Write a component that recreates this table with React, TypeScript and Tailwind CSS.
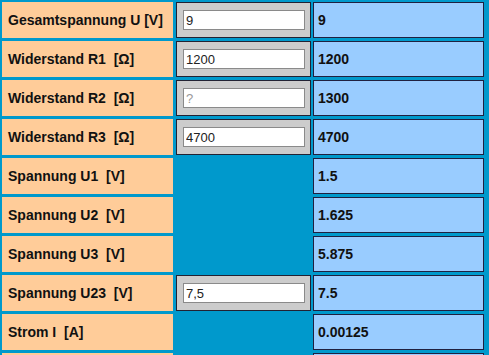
import React from 'react';

type Row = {
  label: string;
  input?: string;
  placeholder?: string;
  value: string;
};

const rows: Row[] = [
  { label: 'Gesamtspannung U [V]', input: '9', value: '9' },
  { label: 'Widerstand R1\u00a0\u00a0[Ω]', input: '1200', value: '1200' },
  { label: 'Widerstand R2\u00a0\u00a0[Ω]', input: '', placeholder: '?', value: '1300' },
  { label: 'Widerstand R3\u00a0\u00a0[Ω]', input: '4700', value: '4700' },
  { label: 'Spannung U1\u00a0\u00a0[V]', value: '1.5' },
  { label: 'Spannung U2\u00a0\u00a0[V]', value: '1.625' },
  { label: 'Spannung U3\u00a0\u00a0[V]', value: '5.875' },
  { label: 'Spannung U23\u00a0\u00a0[V]', input: '7,5', value: '7.5' },
  { label: 'Strom I\u00a0\u00a0[A]', value: '0.00125' },
  // nächste Zeile, nur der obere Rand ist sichtbar
  { label: '', value: '' },
];

function CalcRow({ row }: { row: Row }) {
  return (
    <div className="flex h-[36px] shrink-0">
      {/* Bezeichnung */}
      <div className="flex w-[171px] items-center bg-[#ffcc99] pl-[6px] text-[14px] font-bold text-[#111]">
        {row.label}
      </div>

      {/* Eingabe */}
      {row.input !== undefined ? (
        <div className="ml-[3px] flex w-[135px] items-center border border-[#222233] bg-[#cccccc] pl-[6px]">
          <input
            type="text"
            defaultValue={row.input}
            placeholder={row.placeholder}
            className="h-[20px] w-[122px] border border-[#8a8a8a] bg-white px-[2px] text-[13px] text-[#222] outline-none placeholder:text-[#999]"
          />
        </div>
      ) : (
        <div className="ml-[3px] w-[135px]"></div>
      )}

      {/* Ergebnis */}
      <div className="ml-[2px] flex w-[171px] items-center border border-[#202040] bg-[#99ccff] pl-[4px] text-[14px] font-bold text-[#111]">
        {row.value}
      </div>
    </div>
  );
}

export default function App() {
  return (
    <div
      className="flex h-[355px] w-[489px] flex-col gap-[3px] overflow-hidden bg-[#0099cc] pl-[2px] pt-[2px]"
      style={{ fontFamily: '"Liberation Sans", Arial, sans-serif' }}
    >
      {rows.map((row, i) => (
        <CalcRow key={i} row={row} />
      ))}
    </div>
  );
}
